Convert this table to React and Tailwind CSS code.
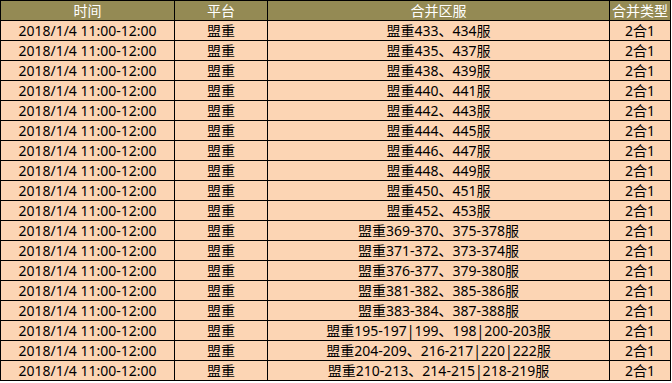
import React from "react";

const rows = [
  "盟重433、434服",
  "盟重435、437服",
  "盟重438、439服",
  "盟重440、441服",
  "盟重442、443服",
  "盟重444、445服",
  "盟重446、447服",
  "盟重448、449服",
  "盟重450、451服",
  "盟重452、453服",
  "盟重369-370、375-378服",
  "盟重371-372、373-374服",
  "盟重376-377、379-380服",
  "盟重381-382、385-386服",
  "盟重383-384、387-388服",
  "盟重195-197|199、198|200-203服",
  "盟重204-209、216-217|220|222服",
  "盟重210-213、214-215|218-219服",
];

export default function App() {
  return (
    <div className="w-[672px] h-[383px] bg-white overflow-hidden font-['Noto_Sans','Noto_Sans_CJK_SC',sans-serif] text-[14px] leading-none">
      <table className="table-fixed border-collapse w-[670px]">
        <colgroup>
          <col className="w-[174px]" />
          <col className="w-[93px]" />
          <col className="w-[342px]" />
          <col className="w-[61px]" />
        </colgroup>
        <thead>
          <tr className="h-[20px] bg-[#948a54] text-white">
            <th className="border border-black p-0 font-normal">时间</th>
            <th className="border border-black p-0 font-normal">平台</th>
            <th className="border border-black p-0 font-normal">合并区服</th>
            <th className="border border-black p-0 font-normal whitespace-nowrap">合并类型</th>
          </tr>
        </thead>
        <tbody>
          {rows.map((r, i) => (
            <tr key={i} className="h-[20px] bg-[#fcd5b4] text-black">
              <td className="border border-black p-0 text-center whitespace-nowrap">2018/1/4 11:00-12:00</td>
              <td className="border border-black p-0 text-center">盟重</td>
              <td className="border border-black p-0 text-center whitespace-nowrap">{r}</td>
              <td className="border border-black p-0 text-center">2合1</td>
            </tr>
          ))}
        </tbody>
      </table>
    </div>
  );
}
